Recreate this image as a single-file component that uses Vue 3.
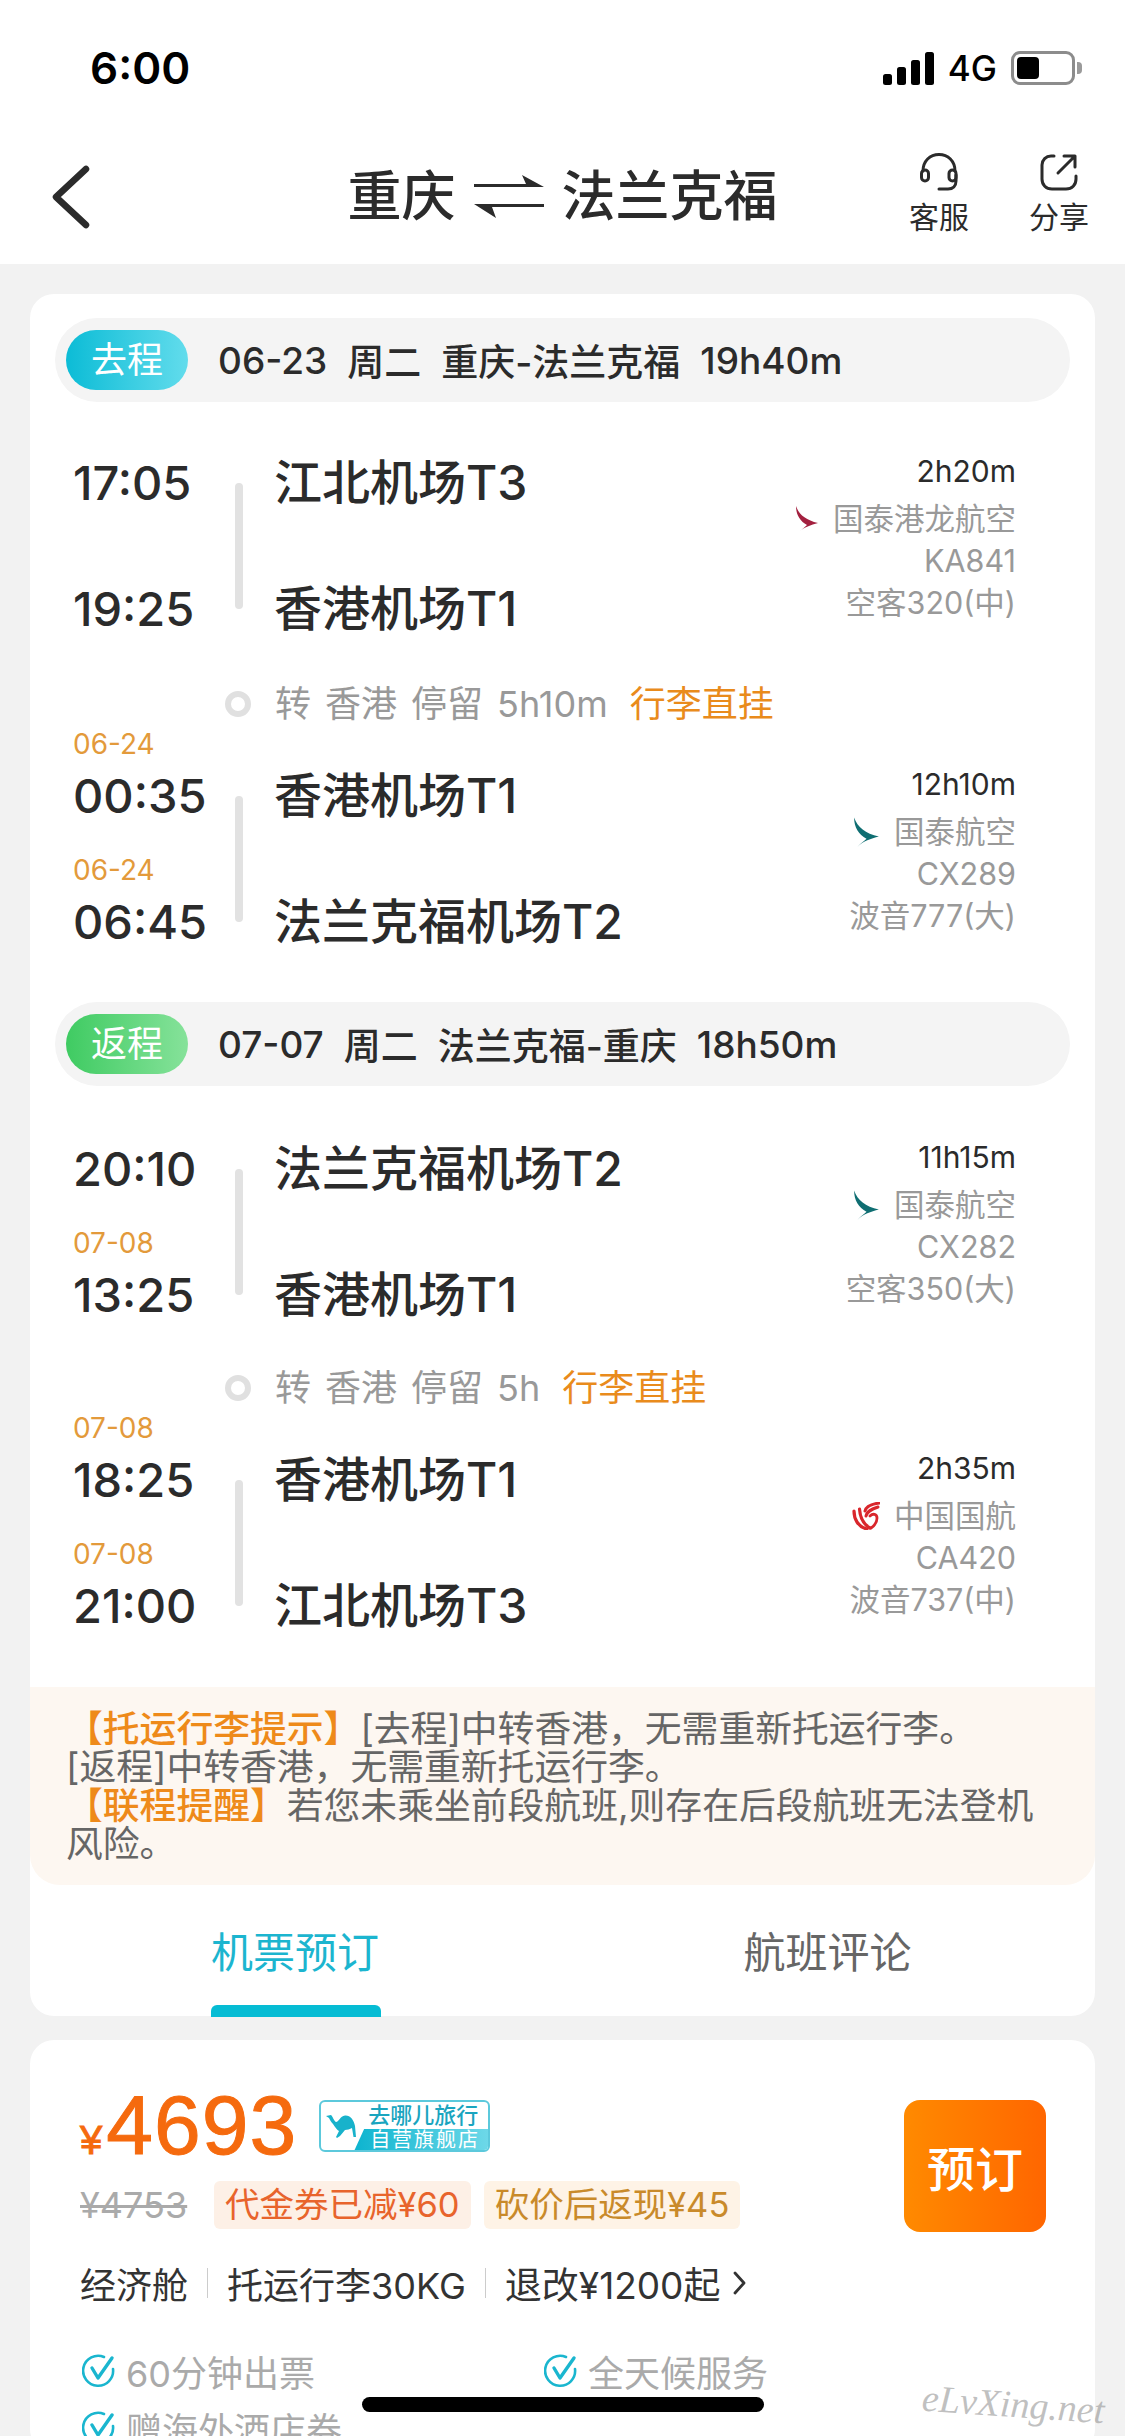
<script setup>
const outbound = [
  {
    dep: { time: '17:05', airport: '江北机场T3' },
    arr: { time: '19:25', airport: '香港机场T1' },
    duration: '2h20m', logo: 'dragon', airline: '国泰港龙航空', no: 'KA841', plane: '空客320(中)',
  },
  {
    dep: { date: '06-24', time: '00:35', airport: '香港机场T1' },
    arr: { date: '06-24', time: '06:45', airport: '法兰克福机场T2' },
    duration: '12h10m', logo: 'cathay', airline: '国泰航空', no: 'CX289', plane: '波音777(大)',
  },
]

const inbound = [
  {
    dep: { time: '20:10', airport: '法兰克福机场T2' },
    arr: { date: '07-08', time: '13:25', airport: '香港机场T1' },
    duration: '11h15m', logo: 'cathay', airline: '国泰航空', no: 'CX282', plane: '空客350(大)',
  },
  {
    dep: { date: '07-08', time: '18:25', airport: '香港机场T1' },
    arr: { date: '07-08', time: '21:00', airport: '江北机场T3' },
    duration: '2h35m', logo: 'airchina', airline: '中国国航', no: 'CA420', plane: '波音737(中)',
  },
]

const trips = [
  { key: 'go', label: '去程', info: ['06-23', '周二', '重庆-法兰克福', '19h40m'], legs: outbound, stop: '5h10m' },
  { key: 'back', label: '返程', info: ['07-07', '周二', '法兰克福-重庆', '18h50m'], legs: inbound, stop: '5h' },
]

const benefits = ['60分钟出票', '全天候服务', '赠海外酒店券']
</script>

<template>
  <div class="page">
    <header class="top">
      <div class="status">
        <span class="clock">6:00</span>
        <div class="status-right">
          <svg class="signal" width="52" height="33" viewBox="0 0 52 33">
            <rect x="0" y="22" width="9" height="11" rx="2.5" />
            <rect x="14" y="15" width="9" height="18" rx="2.5" />
            <rect x="28" y="8" width="9" height="25" rx="2.5" />
            <rect x="42" y="0" width="9" height="33" rx="2.5" />
          </svg>
          <span class="net">4G</span>
          <div class="battery"><i></i></div>
          <div class="battery-cap"></div>
        </div>
      </div>
      <nav class="nav">
        <div class="nav-left">
          <svg width="38" height="64" viewBox="0 0 38 64" fill="none" stroke="#2b2b2b" stroke-width="6.5" stroke-linecap="round" stroke-linejoin="round">
            <path d="M34 4 L4 32 L34 60" />
          </svg>
        </div>
        <div class="title">
          <span>重庆</span>
          <svg width="70" height="44" viewBox="0 0 70 44" fill="#2b2b2b">
            <path d="M0 12 H70 L48 0 L52 9 H0 Z" />
            <path d="M70 29 H0 L22 43 L18 32 H70 Z" />
          </svg>
          <span>法兰克福</span>
        </div>
        <div class="actions">
          <div class="action">
            <svg width="38" height="38" viewBox="0 0 38 38" fill="none" stroke="#2b2b2b" stroke-width="3" stroke-linecap="round">
              <path d="M3 18 C3 8 10 1.5 19 1.5 C28 1.5 35 8 35 18" />
              <rect x="1.5" y="17" width="7" height="11" rx="3.5" />
              <rect x="29" y="17" width="7" height="11" rx="3.5" />
              <path d="M36 22 V28 C36 33 33 36 28 36 H19" />
            </svg>
            <span>客服</span>
          </div>
          <div class="action">
            <svg width="38" height="38" viewBox="0 0 38 38" fill="none" stroke="#2b2b2b" stroke-width="3" stroke-linecap="round" stroke-linejoin="round">
              <path d="M14 3 H11 C6 3 2 7 2 12 V26 C2 32 6 36 12 36 H26 C32 36 36 32 36 26 V23" />
              <path d="M18 20 L35 3 M24 3 H35 V14" />
            </svg>
            <span>分享</span>
          </div>
        </div>
      </nav>
    </header>

    <main class="content">
      <section class="card trip-card">
        <div v-for="trip in trips" :key="trip.key" class="trip">
          <div class="trip-head">
            <span class="trip-badge" :class="trip.key">{{ trip.label }}</span>
            <span v-for="part in trip.info" :key="part" class="trip-info">{{ part }}</span>
          </div>

          <template v-for="(leg, i) in trip.legs" :key="leg.no">
            <div v-if="i === 1" class="transfer">
              <i class="dot"></i>
              <span>转</span><span>香港</span><span>停留</span><span>{{ trip.stop }}</span>
              <b>行李直挂</b>
            </div>
            <div class="leg" :class="{ first: i === 0 }">
              <div class="time">
                <div v-if="leg.dep.date" class="date">{{ leg.dep.date }}</div>
                <div class="clock-time">{{ leg.dep.time }}</div>
              </div>
              <i class="track"></i>
              <div class="airport">{{ leg.dep.airport }}</div>

              <div class="time time-arr">
                <div v-if="leg.arr.date" class="date">{{ leg.arr.date }}</div>
                <div class="clock-time">{{ leg.arr.time }}</div>
              </div>
              <div class="airport airport-arr">{{ leg.arr.airport }}</div>

              <div class="flight">
                <div class="duration">{{ leg.duration }}</div>
                <div class="airline">
                  <svg v-if="leg.logo === 'dragon'" width="24" height="28" viewBox="0 0 24 28">
                    <path fill="#a3203f" d="M1 1 C4 10 11 15 23 18 C16 20 9 22 4 27 C7 24 10 22 12 20 C5 16 1 10 1 1 Z" />
                  </svg>
                  <svg v-else-if="leg.logo === 'cathay'" width="27" height="32" viewBox="0 0 24 28">
                    <path fill="#0f6e72" d="M1 1 C4 10 11 15 23 18 C16 20 9 22 4 27 C7 24 10 22 12 20 C5 16 1 10 1 1 Z" />
                  </svg>
                  <svg v-else width="28" height="28" viewBox="0 0 28 28" fill="none" stroke="#d9262c" stroke-linecap="round">
                    <path stroke-width="3.2" d="M2 9 C2 17 6 25 15 27" />
                    <path stroke-width="3.2" d="M7.5 7 C8 14 11 22 18 26" />
                    <path stroke-width="3" d="M13 9 C14 4 20 2 27 1" />
                    <path stroke-width="3" d="M14 14 C15 9 20 7 26 5" />
                    <path stroke-width="2.8" d="M18 14 C21 11 25 12 25 16 C25 20 22 24 19 26" />
                  </svg>
                  <span>{{ leg.airline }}</span>
                </div>
                <div>{{ leg.no }}</div>
                <div>{{ leg.plane }}</div>
              </div>
            </div>
          </template>
        </div>

        <div class="notice">
          <p><b>【托运行李提示】</b>[去程]中转香港，无需重新托运行李。</p>
          <p>[返程]中转香港，无需重新托运行李。</p>
          <p><b>【联程提醒】</b>若您未乘坐前段航班,则存在后段航班无法登机风险。</p>
        </div>

        <div class="tabs">
          <div class="tab active">机票预订</div>
          <div class="tab">航班评论</div>
        </div>
      </section>

      <section class="card offer">
        <div class="offer-top">
          <div class="offer-main">
            <div class="price-row">
              <span class="price"><small>¥</small>4693</span>
              <div class="qunar">
                <svg width="30" height="24" viewBox="0 0 30 24">
                  <path fill="#18b2cb" d="M0 2 L5 1 C7 3 8 7 10 8 C13 8 14 2 19 1.5 C24 1 28 6 29 12 L30 23 L27.5 23 L26 14 C24 15 21 16 19 16 L14 22 L11 24 L10 23 L13 17 C11 16 9 13 7 10 C5 8 4 6 3 4 Z" />
                </svg>
                <div class="qunar-text">
                  <span class="qunar-name">去哪儿旅行</span>
                  <span class="qunar-flag">自营旗舰店</span>
                </div>
              </div>
            </div>
            <div class="tag-row">
              <s class="old-price">¥4753</s>
              <span class="tag red">代金券已减¥60</span>
              <span class="tag gold">砍价后返现¥45</span>
            </div>
          </div>
          <button class="book">预订</button>
        </div>

        <div class="rules">
          <span>经济舱</span>
          <i></i>
          <span>托运行李30KG</span>
          <i></i>
          <span>退改¥1200起</span>
          <svg width="16" height="24" viewBox="0 0 16 24" fill="none" stroke="#333" stroke-width="2.8" stroke-linecap="round" stroke-linejoin="round">
            <path d="M4 2 L13 12 L4 22" />
          </svg>
        </div>

        <ul class="benefits">
          <li v-for="item in benefits" :key="item">
            <svg width="34" height="34" viewBox="0 0 34 34" fill="none" stroke-width="2.6" stroke-linecap="round" stroke-linejoin="round">
              <path stroke="#1ab6cf" d="M22 3 A15 15 0 1 0 31 15" />
              <path stroke="#1ab6cf" stroke-width="3.4" d="M10 14 L16 24 L30 4" />
            </svg>
            <span>{{ item }}</span>
          </li>
        </ul>
      </section>
    </main>

    <div class="home-bar"></div>
    <div class="watermark">eLvXing.net</div>
  </div>
</template>

<style scoped>
.page {
  position: relative;
  width: 1125px;
  height: 2436px;
  overflow: hidden;
  background: #f2f2f2;
  color: #2b2b2b;
  font-family: Inter, "Noto Sans CJK SC", sans-serif;
}

.top {
  background: #fff;
  height: 264px;
}

.status {
  height: 130px;
  padding: 0 43px 0 90px;
  box-sizing: border-box;
  display: flex;
  justify-content: space-between;
  align-items: center;
  padding-top: 6px;
}

.clock {
  font-size: 44px;
  font-weight: 600;
  color: #000;
}

.status-right {
  display: flex;
  align-items: center;
}

.signal {
  fill: #000;
  margin-right: 13px;
}

.net {
  font-size: 35px;
  font-weight: 500;
  color: #000;
  margin-right: 14px;
}

.battery {
  width: 64px;
  height: 34px;
  box-sizing: border-box;
  border: 3px solid #8c8c8c;
  border-radius: 9px;
  padding: 3px;
}

.battery i {
  display: block;
  width: 22px;
  height: 22px;
  background: #000;
  border-radius: 4px;
}

.battery-cap {
  width: 5px;
  height: 12px;
  margin-left: 2px;
  background: #9a9a9a;
  border-radius: 0 4px 4px 0;
}

.nav {
  height: 134px;
  display: grid;
  grid-template-columns: 1fr auto 1fr;
  align-items: center;
}

.nav-left {
  padding-left: 52px;
  display: flex;
}

.title {
  display: flex;
  align-items: center;
  gap: 18px;
  font-size: 54px;
  font-weight: 500;
  line-height: 64px;
}

.actions {
  justify-self: end;
  display: flex;
  gap: 60px;
  padding-right: 36px;
  margin-top: -4px;
}

.action {
  display: flex;
  flex-direction: column;
  align-items: center;
  gap: 6px;
  font-size: 30px;
  line-height: 40px;
}

.content {
  padding: 30px 30px 0;
  display: flex;
  flex-direction: column;
  gap: 24px;
}

.card {
  background: #fff;
  border-radius: 24px;
}

.trip-card {
  padding-top: 24px;
  height: 1722px;
  box-sizing: border-box;
}

.trip + .trip {
  margin-top: 52px;
}

.trip-head {
  margin: 0 25px;
  height: 84px;
  padding-left: 11px;
  display: flex;
  align-items: center;
  gap: 20px;
  background: #f4f4f4;
  border-radius: 42px;
}

.trip-badge {
  width: 122px;
  height: 60px;
  margin-right: 10px;
  border-radius: 30px;
  color: #fff;
  font-size: 36px;
  line-height: 60px;
  text-align: center;
}

.trip-badge.go {
  background: linear-gradient(90deg, #0cbcd6, #62dcec);
}

.trip-badge.back {
  background: linear-gradient(90deg, #3fcb62, #86e29a);
}

.trip-info {
  font-size: 37px;
  font-weight: 500;
}

.transfer {
  margin: 47px 0 0 195px;
  height: 40px;
  display: flex;
  align-items: center;
  gap: 14px;
  font-size: 36px;
  line-height: 40px;
  color: #999;
}

.trip + .trip .transfer {
  margin-top: 45px;
}

.transfer b {
  margin-left: 8px;
  font-weight: 400;
  color: #e98b1c;
}

.dot {
  width: 14px;
  height: 14px;
  margin-right: 10px;
  border: 6px solid #e0e0e0;
  border-radius: 50%;
}

.leg {
  padding-left: 43px;
  display: grid;
  grid-template-columns: 162px 8px 31px 1fr auto;
  grid-template-rows: auto 126px;
}

.leg.first {
  margin-top: 48px;
}

.trip + .trip .leg.first {
  margin-top: 50px;
}

.time {
  grid-column: 1;
  grid-row: 1;
  align-self: end;
}

.time-arr {
  grid-row: 2;
}

.date {
  font-size: 28px;
  line-height: 40px;
  margin-bottom: 4px;
  color: #e39a3b;
}

.clock-time {
  font-size: 47px;
  font-weight: 500;
  line-height: 56px;
}

.track {
  grid-column: 2;
  grid-row: 1 / 3;
  align-self: end;
  height: 126px;
  margin-bottom: 28px;
  background: #e2e2e2;
  border-radius: 4px;
}

.airport {
  grid-column: 4;
  grid-row: 1;
  align-self: end;
  font-size: 48px;
  font-weight: 500;
  line-height: 56px;
}

.airport-arr {
  grid-row: 2;
}

.flight {
  grid-column: 5;
  grid-row: 1 / 3;
  align-self: end;
  margin: 0 79px 13px 0;
  text-align: right;
  font-size: 30.5px;
  line-height: 42px;
  color: #999;
}

.duration {
  color: #2b2b2b;
  font-size: 30px;
  margin-bottom: 6px;
}

.airline {
  display: flex;
  justify-content: flex-end;
  align-items: center;
  gap: 14px;
}

.notice {
  margin-top: 53px;
  height: 198px;
  padding: 23px 50px 0 36px;
  box-sizing: border-box;
  background: #fdf7f1;
  border-radius: 0 0 30px 30px;
  font-size: 36.8px;
  line-height: 38.3px;
  color: #666;
}

.notice p {
  margin: 0;
}

.notice b {
  font-weight: 500;
  color: #ee8a1a;
}

.tabs {
  height: 132px;
  display: grid;
  grid-template-columns: 1fr 1fr;
}

.tab {
  position: relative;
  height: 132px;
  box-sizing: border-box;
  padding-top: 40px;
  padding-left: 181px;
  font-size: 42px;
  line-height: 56px;
  color: #666;
}

.tab.active {
  color: #1cb5cf;
}

.tab.active::after {
  content: "";
  position: absolute;
  left: 181px;
  bottom: 0;
  width: 170px;
  height: 12px;
  background: #06bcd4;
  border-radius: 6px 6px 0 0;
}

.offer {
  padding: 48px 49px 0 50px;
}

.offer-top {
  display: flex;
  justify-content: space-between;
}

.price-row {
  height: 70px;
  display: flex;
  align-items: center;
  gap: 22px;
}

.price {
  margin-top: 18px;
  font-family: "Liberation Sans", sans-serif;
  font-size: 84px;
  line-height: 70px;
  font-weight: 400;
  letter-spacing: 1px;
  color: #f56a0e;
  -webkit-text-stroke: 1px #f56a0e;
}

.price small {
  font-size: 40px;
  margin-right: 3px;
}

.qunar {
  width: 171px;
  height: 52px;
  margin-top: 6px;
  box-sizing: border-box;
  border: 2px solid #5cc9dc;
  border-radius: 6px;
  display: flex;
  align-items: center;
  overflow: hidden;
  padding-left: 5px;
}

.qunar-text {
  display: flex;
  flex-direction: column;
  margin-left: 12px;
  flex: 1;
}

.qunar-name {
  font-size: 22px;
  line-height: 28px;
  font-weight: 500;
  color: #1aa5bf;
}

.qunar-flag {
  margin-left: -14px;
  padding-left: 16px;
  font-size: 20px;
  line-height: 22px;
  letter-spacing: 2px;
  color: #fff;
  background: linear-gradient(90deg, #0db4cf, #6dd8e8);
  clip-path: polygon(10px 0, 100% 0, 100% 100%, 0 100%);
  white-space: nowrap;
}

.tag-row {
  margin-top: 23px;
  height: 48px;
  display: flex;
  align-items: center;
}

.old-price {
  width: 134px;
  font-size: 36px;
  color: #aaa;
}

.tag {
  height: 48px;
  border-radius: 6px;
  padding: 0 11px;
  font-size: 34.5px;
  line-height: 48px;
  white-space: nowrap;
}

.tag.red {
  background: #fdf0e6;
  color: #e8642c;
}

.tag.gold {
  margin-left: 13px;
  background: #fef3e6;
  color: #c98a2a;
}

.book {
  width: 142px;
  height: 132px;
  margin-top: 12px;
  border: none;
  border-radius: 16px;
  background: linear-gradient(90deg, #ff8a00, #ff6600);
  color: #fff;
  font: 500 48px Inter, "Noto Sans CJK SC", sans-serif;
}

.rules {
  margin-top: 26px;
  height: 50px;
  display: flex;
  align-items: center;
  gap: 19px;
  font-size: 36px;
  color: #333;
}

.rules i {
  width: 1px;
  height: 30px;
  background: #ccc;
}

.rules span:last-of-type {
  font-size: 37px;
}

.rules svg {
  margin-left: -8px;
}

.benefits {
  margin: 38px 0 0;
  padding: 0 0 0 2px;
  list-style: none;
  display: grid;
  grid-template-columns: 462px 1fr;
  grid-auto-rows: 50px;
  row-gap: 7px;
  font-size: 36px;
  color: #aaa;
}

.benefits li {
  display: flex;
  align-items: center;
  gap: 10px;
}

.home-bar {
  position: absolute;
  left: 362px;
  top: 2397px;
  width: 402px;
  height: 15px;
  background: #000;
  border-radius: 8px;
}

.watermark {
  position: absolute;
  left: 922px;
  top: 2382px;
  font-family: "Liberation Serif", serif;
  font-style: italic;
  font-size: 38px;
  color: rgba(130, 130, 130, 0.5);
  transform: rotate(4deg);
}
</style>
